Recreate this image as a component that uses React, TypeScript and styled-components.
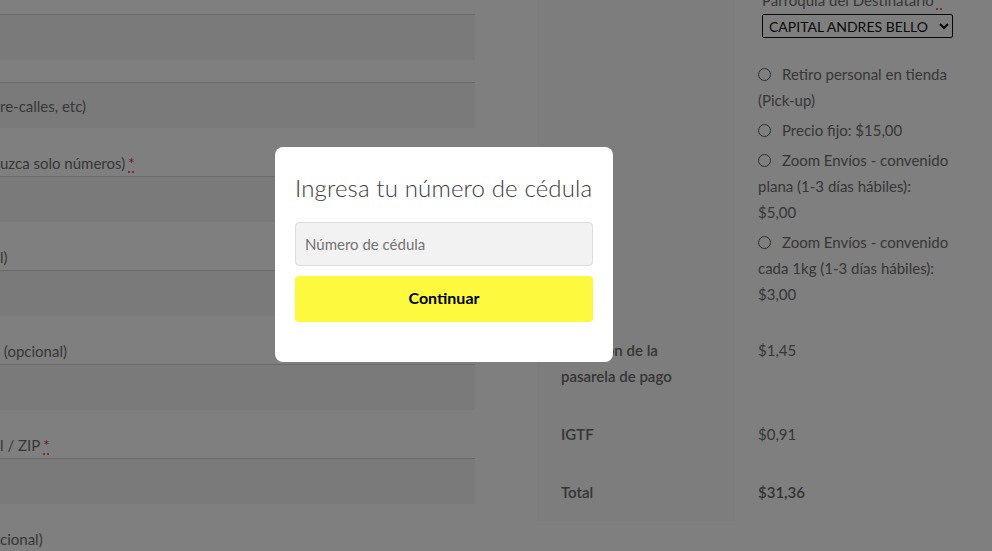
import React from "react";
import styled, { createGlobalStyle } from "styled-components";

const GlobalStyle = createGlobalStyle`
  html, body { margin: 0; padding: 0; overflow: hidden; background: #ffffff; }
  body {
    font-family: "Lato", "Open Sans", sans-serif;
    font-size: 15px;
    line-height: 26px;
    color: #6e6e6e;
  }
  * { box-sizing: border-box; }
`;

const Page = styled.div`
  display: grid;
  grid-template-columns: 475px 455px;
  column-gap: 62px;
  align-items: start;
  margin-top: -13px;
  width: 992px;
`;

const FormColumn = styled.div`
  display: flex;
  flex-direction: column;
  padding-top: 27px;
`;

const Field = styled.div`
  display: flex;
  flex-direction: column;
  margin-bottom: 22px;
`;

const Label = styled.label`
  display: block;
  white-space: pre;
  height: 26px;
  line-height: 26px;
  color: #6e6e6e;
`;

const Required = styled.abbr`
  color: #d9382a;
  text-decoration: underline dotted;
  text-underline-offset: 3px;
  margin-left: 3px;
`;

const TextInput = styled.input`
  display: block;
  width: 475px;
  height: 46px;
  margin: 0;
  padding: 0;
  border: 0;
  border-top: 1px solid #d6d6d6;
  background: #f4f4f4;
  font-family: "Lato", sans-serif;
  font-size: 15px;
  color: #6e6e6e;
  outline: none;
  &::placeholder { color: #707070; opacity: 1; }
`;

const OrderTable = styled.table`
  border-collapse: collapse;
  width: 455px;
  table-layout: fixed;
`;

const Th = styled.th`
  width: 198px;
  background: #fafafa;
  padding: 16px 26px 16px 24px;
  text-align: left;
  vertical-align: top;
  font-weight: 600;
  color: #6a6a6a;
`;

const Td = styled.td`
  padding: 16px 10px 16px 23px;
  vertical-align: top;
  color: #6e6e6e;
`;

const ShippingTd = styled(Td)`
  padding-top: 0;
  padding-bottom: 14px;
`;

const Strong = styled.strong`
  font-weight: 600;
  color: #666666;
`;

const ParroquiaField = styled.div`
  padding-left: 4px;
  display: flex;
  flex-direction: column;
  align-items: flex-start;
`;

const Select = styled.select`
  margin-top: 1px;
  width: 191px;
  height: 24px;
  border: 1px solid #111111;
  border-radius: 2px;
  background: #ffffff;
  color: #111111;
  font-family: "Lato", sans-serif;
  font-size: 14px;
  padding: 0 2px;
`;

const MethodList = styled.ul`
  list-style: none;
  margin: 23px 0 0 0;
  padding: 0;
  width: 191px;
`;

const MethodItem = styled.li`
  margin-bottom: 4px;
  &:last-child { margin-bottom: 0; }
`;

const Radio = styled.input.attrs({ type: "radio" })`
  appearance: none;
  -webkit-appearance: none;
  width: 13px;
  height: 13px;
  margin: 0 11px 0 0;
  border: 1px solid #5a5a5a;
  border-radius: 50%;
  background: #ffffff;
  vertical-align: -1px;
`;

const Overlay = styled.div`
  position: fixed;
  inset: 0;
  background: rgba(0, 0, 0, 0.5);
`;

const Modal = styled.div`
  position: fixed;
  left: 275px;
  top: 147px;
  width: 338px;
  height: 215px;
  background: #ffffff;
  border-radius: 8px;
  padding: 20px 20px 40px 20px;
  display: flex;
  flex-direction: column;
`;

const ModalTitle = styled.h2`
  margin: 6px 0 20px 0;
  font-family: "Lato", sans-serif;
  font-weight: 300;
  font-size: 24px;
  line-height: 29px;
  letter-spacing: 0.15px;
  color: #3b3b3b;
  white-space: nowrap;
`;

const CedulaInput = styled.input`
  display: block;
  width: 298px;
  height: 44px;
  margin: 0;
  padding: 0 9px;
  border: 1px solid #dcdcdc;
  border-radius: 4px;
  background: #f2f2f2;
  font-family: "Lato", sans-serif;
  font-size: 15px;
  color: #333333;
  outline: none;
  &::placeholder { color: #737373; opacity: 1; }
`;

const ContinueButton = styled.button`
  margin-top: 10px;
  width: 298px;
  height: 46px;
  padding: 0 0 3px 0;
  border: 0;
  border-radius: 4px;
  background: #fdf93f;
  color: #000000;
  font-family: "Lato", sans-serif;
  font-weight: 700;
  font-size: 16px;
  cursor: pointer;
`;

const methods = [
  "Retiro personal en tienda (Pick-up)",
  "Precio fijo: $15,00",
  "Zoom Envíos - convenido plana (1-3 días hábiles): $5,00",
  "Zoom Envíos - convenido cada 1kg (1-3 días hábiles): $3,00",
];

export default function App() {
  return (
    <>
      <GlobalStyle />
      <Page>
        <FormColumn>
          <Field>
            <TextInput aria-label="Dirección" />
          </Field>
          <Field>
            <TextInput placeholder="re-calles, etc)" />
          </Field>
          <Field>
            <Label>
              uzca solo números)<Required title="obligatorio">*</Required>
            </Label>
            <TextInput />
          </Field>
          <Field>
            <Label>l)</Label>
            <TextInput />
          </Field>
          <Field>
            <Label>{"\u00a0(opcional)"}</Label>
            <TextInput />
          </Field>
          <Field>
            <Label>
              l / ZIP<Required title="obligatorio">*</Required>
            </Label>
            <TextInput />
          </Field>
          <Field>
            <Label>cional)</Label>
          </Field>
        </FormColumn>

        <OrderTable>
          <tbody>
            <tr>
              <Th />
              <ShippingTd>
                <ParroquiaField>
                  <Label>
                    Parroquia del Destinatario<Required title="obligatorio">*</Required>
                  </Label>
                  <Select defaultValue="capital">
                    <option value="capital">CAPITAL ANDRES BELLO</option>
                  </Select>
                </ParroquiaField>
                <MethodList>
                  {methods.map((m) => (
                    <MethodItem key={m}>
                      <Radio name="shipping" />
                      {m}
                    </MethodItem>
                  ))}
                </MethodList>
              </ShippingTd>
            </tr>
            <tr>
              <Th>Comisión de la pasarela de pago</Th>
              <Td>$1,45</Td>
            </tr>
            <tr>
              <Th>IGTF</Th>
              <Td>$0,91</Td>
            </tr>
            <tr>
              <Th>Total</Th>
              <Td>
                <Strong>$31,36</Strong>
              </Td>
            </tr>
          </tbody>
        </OrderTable>
      </Page>

      <Overlay />
      <Modal role="dialog">
        <ModalTitle>Ingresa tu número de cédula</ModalTitle>
        <CedulaInput placeholder="Número de cédula" />
        <ContinueButton>Continuar</ContinueButton>
      </Modal>
    </>
  );
}
